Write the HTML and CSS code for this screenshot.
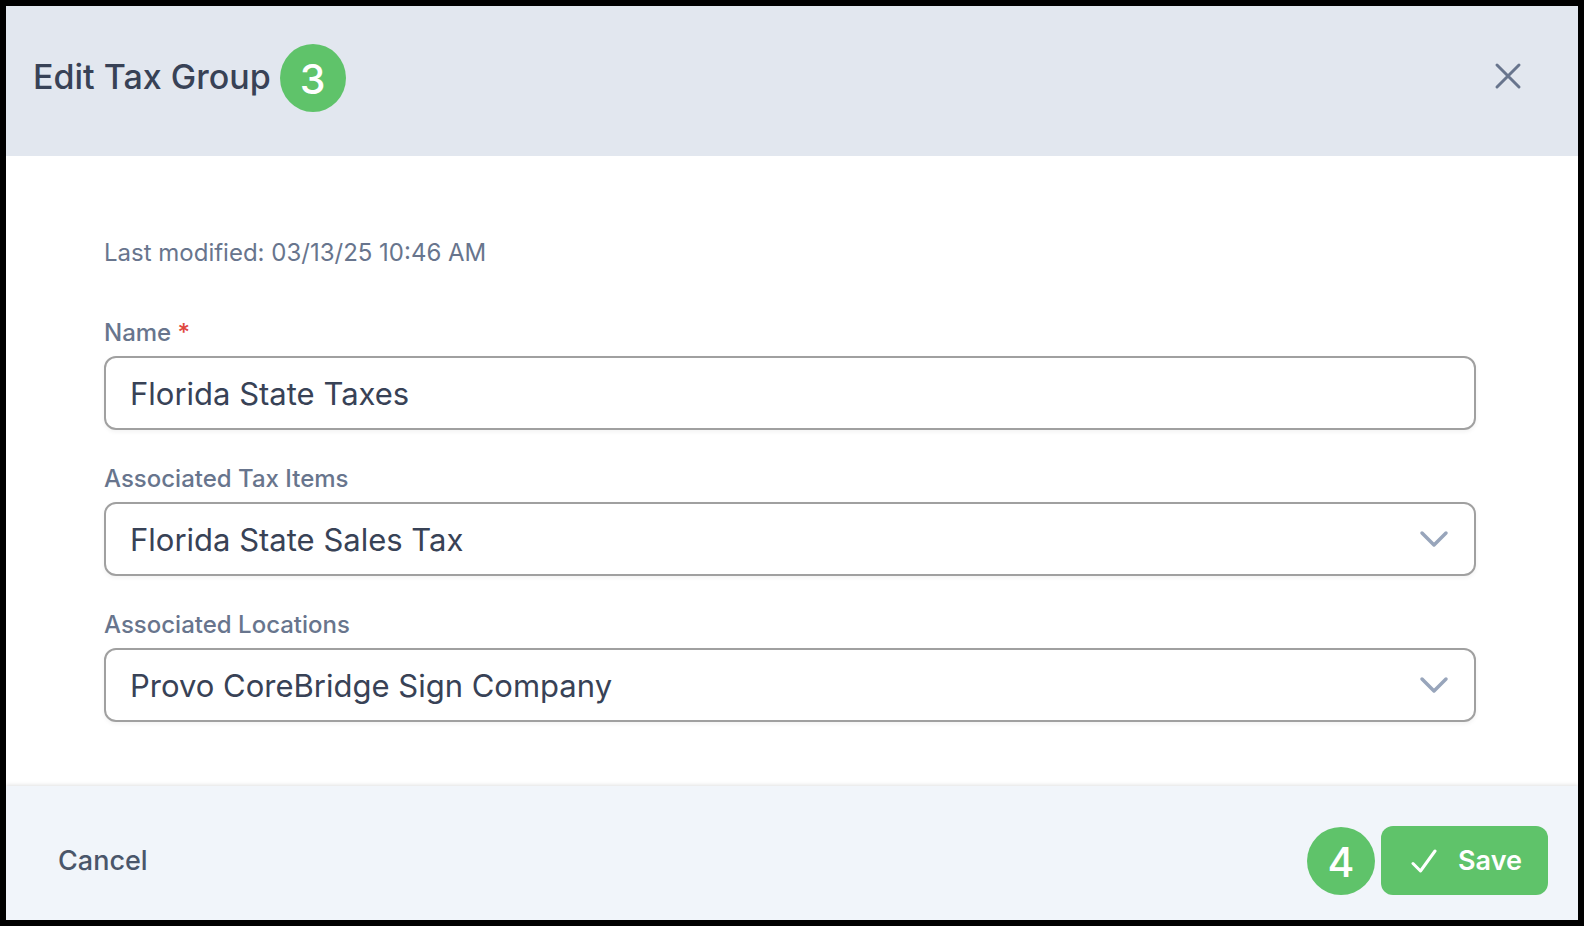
FILE: index.html
```html
<!DOCTYPE html>
<html lang="en">
<head>
<meta charset="utf-8">
<meta name="viewport" content="width=device-width, initial-scale=1">
<title>Edit Tax Group</title>
<link rel="stylesheet" href="styles.css">
</head>
<body>
<form class="dialog" aria-labelledby="dialog-title">
  <header class="dialog-header">
    <h1 class="dialog-title" id="dialog-title">Edit Tax Group</h1>
    <span class="badge badge-header">3</span>
    <button class="close" type="button" aria-label="Close">
      <svg width="28" height="28" viewBox="0 0 28 28" fill="none" stroke="currentColor" stroke-width="3" stroke-linecap="round"><path d="M3 3 25 25M25 3 3 25"/></svg>
    </button>
  </header>
  <main class="dialog-body">
    <p class="modified">Last modified: 03/13/25 10:46 AM</p>
    <div class="field">
      <label class="label" for="name">Name <span class="required">*</span></label>
      <input class="control" id="name" type="text" value="Florida State Taxes">
    </div>
    <div class="field">
      <label class="label" for="items">Associated Tax Items</label>
      <div class="select-wrap">
        <select class="control" id="items"><option>Florida State Sales Tax</option></select>
        <svg class="chevron" width="30" height="20" viewBox="0 0 30 20" fill="none" stroke="currentColor" stroke-width="3.500" stroke-linecap="round" stroke-linejoin="round"><path d="M3 4 15 16 27 4"/></svg>
      </div>
    </div>
    <div class="field">
      <label class="label" for="locations">Associated Locations</label>
      <div class="select-wrap">
        <select class="control" id="locations"><option>Provo CoreBridge Sign Company</option></select>
        <svg class="chevron" width="30" height="20" viewBox="0 0 30 20" fill="none" stroke="currentColor" stroke-width="3.500" stroke-linecap="round" stroke-linejoin="round"><path d="M3 4 15 16 27 4"/></svg>
      </div>
    </div>
  </main>
  <footer class="dialog-footer">
    <button class="cancel" type="button">Cancel</button>
    <div class="actions">
      <span class="badge">4</span>
      <button class="save" type="submit">
        <svg width="26" height="26" viewBox="0 0 26 26" fill="none" stroke="currentColor" stroke-width="3" stroke-linecap="round" stroke-linejoin="round"><path d="M2 15.500 9.500 23 24 3"/></svg>
        Save
      </button>
    </div>
  </footer>
</form>
</body>
</html>
```
FILE: styles.css
```css
* { box-sizing: border-box; }

body {
  margin: 0;
  background: #000;
  font-family: Inter, "Liberation Sans", sans-serif;
  color: #384256;
}

button, input, select { font: inherit; color: inherit; }

.dialog {
  display: flex;
  flex-direction: column;
  min-height: 100vh;
  border: 6px solid #000;
  background: #fff;
}

.dialog-header {
  display: flex;
  align-items: center;
  gap: 9px;
  padding: 36px 56px 42px 27px;
  background: #e2e7ef;
}

.dialog-title {
  margin: 0;
  padding-bottom: 2px;
  font-size: 34px;
  line-height: 70px;
  font-weight: 500;
}

.badge {
  display: flex;
  align-items: center;
  justify-content: center;
  width: 68px;
  height: 68px;
  padding-top: 2px;
  border-radius: 50%;
  background: #5fc36a;
  color: #fff;
  font-size: 41px;
  line-height: 48px;
  font-weight: 500;
}

.badge-header { width: 66px; }

.close {
  display: flex;
  margin-left: auto;
  padding: 0 0 4px;
  border: 0;
  background: none;
  color: #68758d;
}

.dialog-body {
  flex: 1;
  display: flex;
  flex-direction: column;
  gap: 33px;
  padding: 81px 102px 63px 98px;
}

.modified {
  margin: 0 0 15px;
  font-size: 24px;
  line-height: 32px;
  color: #68758d;
}

.field {
  display: flex;
  flex-direction: column;
  gap: 7px;
}

.label {
  font-size: 24px;
  line-height: 32px;
  font-weight: 500;
  color: #68758d;
}

.required { color: #e0483e; }

.control {
  display: block;
  width: 100%;
  height: 74px;
  padding: 0 24px;
  border: 2px solid #a0a0a0;
  border-radius: 12px;
  background: #fff;
  box-shadow: 0 2px 4px rgba(0, 0, 0, 0.05);
  font-size: 31px;
  appearance: none;
}

.select-wrap { position: relative; }

.chevron {
  position: absolute;
  right: 27px;
  top: 27px;
  color: #98a5bb;
  pointer-events: none;
}

.dialog-footer {
  display: flex;
  align-items: center;
  justify-content: space-between;
  padding: 40px 30px 25px 52px;
  background: #f1f5fa;
  box-shadow: 0 -1px 4px rgba(0, 0, 0, 0.12);
}

.cancel {
  padding: 0;
  border: 0;
  background: none;
  color: #4a566a;
  font-size: 27px;
  font-weight: 500;
}

.actions {
  display: flex;
  align-items: center;
  gap: 6px;
}

.save {
  display: flex;
  align-items: center;
  gap: 21px;
  height: 69px;
  padding: 0 26px 0 30px;
  border: 0;
  border-radius: 12px;
  background: #5fc36a;
  color: #fff;
  font-size: 27px;
  font-weight: 600;
}
```
